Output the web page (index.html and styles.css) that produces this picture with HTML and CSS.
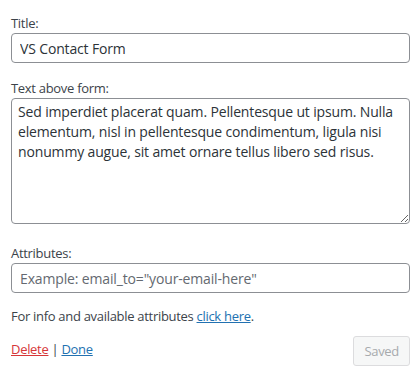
FILE: index.html
```html
<!DOCTYPE html>
<html lang="en">
<head>
  <meta charset="UTF-8" />
  <title>VS Contact Form widget</title>
  <link rel="stylesheet" href="styles.css">
</head>
<body>
  <div class="widget-form">
    <div class="field">
      <label for="title">Title:</label>
      <input id="title" class="widefat" type="text" value="VS Contact Form">
    </div>

    <div class="field">
      <label for="text">Text above form:</label>
      <textarea id="text" class="widefat" rows="6">Sed imperdiet placerat quam. Pellentesque ut ipsum. Nulla elementum, nisl in pellentesque condimentum, ligula nisi nonummy augue, sit amet ornare tellus libero sed risus.</textarea>
    </div>

    <div class="field attributes">
      <label for="attributes">Attributes:</label>
      <input id="attributes" class="widefat" type="text" placeholder='Example: email_to="your-email-here"'>
    </div>

    <p class="info">For info and available attributes <a href="#">click here</a>.</p>

    <div class="widget-actions">
      <div class="links">
        <a href="#" class="delete">Delete</a> | <a href="#" class="done">Done</a>
      </div>
      <button class="button" disabled>Saved</button>
    </div>
  </div>
</body>
</html>
```

FILE: styles.css
```css
body {
  margin: 0;
  font-family: "Open Sans", "Noto Sans", sans-serif;
  font-size: 13px;
  line-height: 1.4;
  letter-spacing: -0.3px;
  color: #3c434a;
  background: #fff;
}

.widget-form {
  padding: 14px 10px 0 11px;
}

.field label {
  display: block;
  height: 18px;
  margin-bottom: 1px;
}

.field + .field {
  margin-top: 16px;
}

.field.attributes {
  margin-top: 20px;
}

.widefat {
  display: block;
  box-sizing: border-box;
  width: 100%;
  margin: 0;
  font-family: inherit;
  font-size: 14px;
  line-height: 20px;
  letter-spacing: -0.15px;
  color: #2c3338;
  background: #fff;
  border: 1px solid #8c8f94;
  border-radius: 4px;
}

input.widefat {
  height: 30px;
  padding: 0 8px;
}

input.widefat::placeholder {
  color: #646970;
}

textarea.widefat {
  height: 126px;
  padding: 3px 6px;
}

.info {
  margin: 14px 0 0;
}

a {
  color: #2271b1;
}

.widget-actions {
  display: flex;
  justify-content: space-between;
  align-items: flex-start;
  margin-top: 11px;
}

.links {
  padding-top: 4px;
}

.links .delete {
  color: #d63638;
}

.button {
  height: 30px;
  padding: 0 10px;
  font-family: inherit;
  font-size: 13px;
  letter-spacing: -0.3px;
  color: #a7aaad;
  background: #f6f7f7;
  border: 1px solid #dcdcde;
  border-radius: 3px;
}
```
